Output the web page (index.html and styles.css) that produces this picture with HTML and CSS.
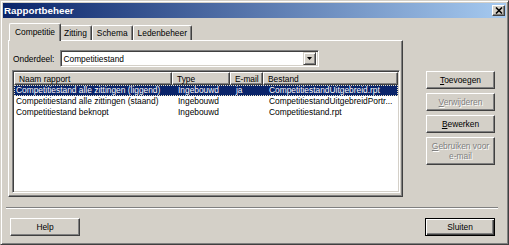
FILE: index.html
```html
<!DOCTYPE html>
<html>
<head>
<meta charset="utf-8">
<link rel="stylesheet" href="styles.css">
</head>
<body>
<div class="window">
  <div class="titlebar">
    <span class="title">Rapportbeheer</span>
    <div class="close">
      <svg width="8" height="7" viewBox="0 0 8 7"><path d="M1 0.5L7 6.5M7 0.5L1 6.5" stroke="#000" stroke-width="1.6" fill="none"/></svg>
    </div>
  </div>
  <div class="content">
    <div class="main">
      <div class="tabs-area">
        <div class="tabstrip">
          <div class="tab tab-active">Competitie</div>
          <div class="tab">Zitting</div>
          <div class="tab">Schema</div>
          <div class="tab">Ledenbeheer</div>
        </div>
        <div class="panel">
          <div class="field-row">
            <span class="label">Onderdeel:</span>
            <div class="combo">
              <span class="combo-text">Competitiestand</span>
              <div class="combo-btn">
                <svg width="5" height="3" viewBox="0 0 5 3"><path d="M0 0H5L2.5 3Z" fill="#000"/></svg>
              </div>
            </div>
          </div>
          <div class="list">
            <div class="list-header">
              <div class="hcell">Naam rapport</div>
              <div class="hcell">Type</div>
              <div class="hcell">E-mail</div>
              <div class="hcell">Bestand</div>
            </div>
            <div class="list-row selected">
              <div class="cell cell-first">Competitiestand alle zittingen (liggend)</div>
              <div class="cell">Ingebouwd</div>
              <div class="cell">ja</div>
              <div class="cell">CompetitiestandUitgebreid.rpt</div>
            </div>
            <div class="list-row">
              <div class="cell cell-first">Competitiestand alle zittingen (staand)</div>
              <div class="cell">Ingebouwd</div>
              <div class="cell"></div>
              <div class="cell">CompetitiestandUitgebreidPortr...</div>
            </div>
            <div class="list-row">
              <div class="cell cell-first">Competitiestand beknopt</div>
              <div class="cell">Ingebouwd</div>
              <div class="cell"></div>
              <div class="cell">Competitiestand.rpt</div>
            </div>
          </div>
        </div>
      </div>
      <div class="side">
        <div class="btn"><span><u>T</u>oevoegen</span></div>
        <div class="btn btn-disabled"><span><u>V</u>erwijderen</span></div>
        <div class="btn"><span><u>B</u>ewerken</span></div>
        <div class="btn btn-tall btn-disabled"><span><u>G</u>ebruiken voor<br>e-mail</span></div>
      </div>
    </div>
    <div class="separator"></div>
    <div class="footer">
      <div class="btn btn-footer">Help</div>
      <div class="btn btn-footer btn-default">Sluiten</div>
    </div>
  </div>
</div>
</body>
</html>
```
FILE: styles.css
```css
* { box-sizing: border-box; }
html, body { margin: 0; padding: 0; background: #D4D0C8; }
body { width: 509px; height: 245px; overflow: hidden; }

.window {
  width: 509px;
  height: 245px;
  display: flex;
  flex-direction: column;
  background: #D4D0C8;
  border: 1px solid;
  border-color: #D4D0C8 #404040 #404040 #D4D0C8;
  box-shadow: inset 1px 1px 0 #fff, inset -1px -1px 0 #808080;
  padding: 2px;
  font-family: "Liberation Sans", Arial, sans-serif;
  font-size: 8.4px;
  line-height: 10px;
  color: #000;
}

.titlebar {
  height: 15px;
  flex: none;
  display: flex;
  align-items: center;
  justify-content: space-between;
  padding: 0 1px 0 1px;
  background: linear-gradient(to right, #0A246A, #A6CAF0);
}
.title { color: #fff; font-weight: bold; font-size: 9.8px; }
.close {
  width: 13px;
  height: 11px;
  background: #D4D0C8;
  border: 1px solid;
  border-color: #fff #404040 #404040 #fff;
  box-shadow: inset -1px -1px 0 #808080;
  display: flex;
  align-items: center;
  justify-content: center;
}
.close svg { display: block; }

.content { flex: 1; display: flex; flex-direction: column; }
.main { display: flex; margin: 5px 0 0 5px; }
.tabs-area { width: 395px; display: flex; flex-direction: column; }

.tabstrip { display: flex; height: 17px; padding-left: 3px; align-items: flex-end; }
.tab {
  height: 15px;
  padding: 2px 4px 0;
  border: 1px solid;
  border-bottom: none;
  border-color: #fff #404040 #404040 #fff;
  box-shadow: inset -1px 0 0 #808080;
  border-radius: 2px 2px 0 0;
  white-space: nowrap;
  background: #D4D0C8;
}
.tab-active {
  height: 18px;
  margin: 0 -2px -1px;
  padding: 3px 5px 0;
  position: relative;
  z-index: 1;
}

.panel {
  height: 157px;
  border: 1px solid;
  border-color: #fff #404040 #404040 #fff;
  box-shadow: inset -1px -1px 0 #808080;
  padding: 9px 2px 0 3px;
  display: flex;
  flex-direction: column;
}
.field-row { display: flex; align-items: center; height: 17px; padding-left: 1px; gap: 6px; }
.combo {
  width: 259px;
  height: 17px;
  background: #fff;
  border: 1px solid;
  border-color: #808080 #fff #fff #808080;
  box-shadow: inset 1px 1px 0 #404040, inset -1px -1px 0 #D4D0C8;
  padding: 2px;
  display: flex;
  align-items: center;
}
.combo-text { flex: 1; padding-left: 0; }
.combo-btn {
  width: 13px;
  height: 13px;
  background: #D4D0C8;
  border: 1px solid;
  border-color: #D4D0C8 #404040 #404040 #D4D0C8;
  box-shadow: inset 1px 1px 0 #fff, inset -1px -1px 0 #808080;
  display: flex;
  align-items: center;
  justify-content: center;
}
.combo-btn svg { display: block; }

.list {
  margin-top: 3px;
  height: 123px;
  background: #fff;
  border: 1px solid;
  border-color: #808080 #fff #fff #808080;
  box-shadow: inset 1px 1px 0 #404040, inset -1px -1px 0 #D4D0C8;
  padding: 1px;
  overflow: hidden;
}
.list-header, .list-row { display: grid; grid-template-columns: 158px 58px 33px 1fr; }
.hcell {
  height: 13px;
  border: 1px solid;
  border-color: #fff #404040 #404040 #fff;
  box-shadow: inset -1px -1px 0 #808080;
  background: #D4D0C8;
  padding: 1px 0 0 4px;
  white-space: nowrap;
  overflow: hidden;
}
.list-row { height: 11px; line-height: 11px; }
.cell { padding-left: 6px; white-space: nowrap; overflow: hidden; }
.cell-first { padding-left: 2px; }
.list-row.selected {
  background: #0A246A;
  color: #fff;
  outline: 1px dotted #E8E4C8;
  outline-offset: -1px;
}

.side {
  display: flex;
  flex-direction: column;
  gap: 4px;
  margin-left: 23px;
  padding-top: 48px;
  width: 69px;
}
.btn {
  height: 18px;
  background: #D4D0C8;
  border: 1px solid;
  border-color: #fff #404040 #404040 #fff;
  box-shadow: inset -1px -1px 0 #808080;
  display: flex;
  align-items: center;
  justify-content: center;
  text-align: center;
  line-height: 10px;
  white-space: nowrap;
}
.btn-tall { height: 28px; }
.btn-disabled { color: #808080; text-shadow: 1px 1px 0 #fff; }
.btn-default {
  border-color: #000;
  box-shadow: inset 1px 1px 0 #fff, inset -1px -1px 0 #404040, inset -2px -2px 0 #808080;
}

.separator {
  height: 2px;
  margin: 10px 8px 0 3px;
  border-top: 1px solid #808080;
  border-bottom: 1px solid #fff;
}
.footer { display: flex; justify-content: space-between; margin: 9px 11px 0 7px; }
.btn-footer { width: 70px; }
```
